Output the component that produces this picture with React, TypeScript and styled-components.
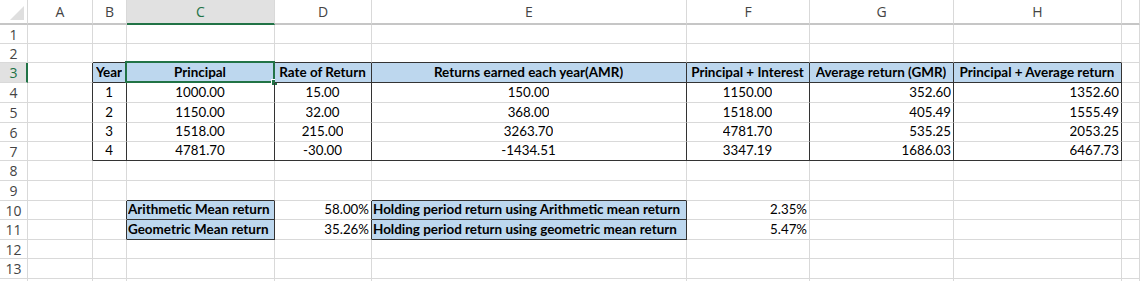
import React from "react";
import styled, { createGlobalStyle, css } from "styled-components";

const GlobalStyle = createGlobalStyle`
  body {
    margin: 0;
    background: #ffffff;
  }
`;

const GRID = "#d9d9d9";
const DARK = "#333333";
const GREEN = "#217346";
const BLUE = "#bdd7ee";

const COLS = ["A", "B", "C", "D", "E", "F", "G", "H", ""];
// last row is only partly visible at the bottom edge
const ROW_HEIGHTS = [19, 19, 20, 20, 20, 19, 19, 20, 20, 19, 20, 19, 20, 20];
const VISIBLE_ROWS = 13;

type Align = "left" | "center" | "right";

interface CellSpec {
  text?: string;
  bold?: boolean;
  align?: Align;
  fill?: boolean;
  top?: boolean;
  left?: boolean;
  right?: boolean;
  bottom?: boolean;
}

const cells: Record<string, CellSpec> = {};

const headers = [
  "Year",
  "Principal",
  "Rate of Return",
  "Returns earned each year(AMR)",
  "Principal + Interest",
  "Average return (GMR)",
  "Principal + Average return",
];
headers.forEach((text, i) => {
  cells[COLS[i + 1] + "3"] = {
    text,
    bold: true,
    align: "center",
    fill: true,
    top: true,
    left: true,
    right: true,
    bottom: true,
  };
});

const data = [
  ["1", "1000.00", "15.00", "150.00", "1150.00", "352.60", "1352.60"],
  ["2", "1150.00", "32.00", "368.00", "1518.00", "405.49", "1555.49"],
  ["3", "1518.00", "215.00", "3263.70", "4781.70", "535.25", "2053.25"],
  ["4", "4781.70", "-30.00", "-1434.51", "3347.19", "1686.03", "6467.73"],
];
data.forEach((row, r) => {
  row.forEach((text, i) => {
    cells[COLS[i + 1] + (r + 4)] = {
      text,
      align: i >= 5 ? "right" : "center",
      left: true,
      right: true,
      bottom: r === 3,
    };
  });
});

const boxed = { bold: true, fill: true, top: true, left: true, right: true, bottom: true, align: "left" as Align };
cells.C10 = { ...boxed, text: "Arithmetic Mean return" };
cells.C11 = { ...boxed, text: "Geometric Mean return" };
cells.E10 = { ...boxed, text: "Holding period return using Arithmetic mean return" };
cells.E11 = { ...boxed, text: "Holding period return using geometric mean return" };
cells.D10 = { text: "58.00%", align: "right" };
cells.D11 = { text: "35.26%", align: "right" };
cells.F10 = { text: "2.35%", align: "right" };
cells.F11 = { text: "5.47%", align: "right" };

const spec = (col: number, row: number): CellSpec => cells[(COLS[col] || "?") + row] || {};

const SELECTED_COL = "C";
const SELECTED_ROW = 3;

const Sheet = styled.div`
  display: grid;
  grid-template-columns: 28px 65px 34px 148px 97px 315px 123px 144px 168px 1fr;
  grid-template-rows: 25px ${ROW_HEIGHTS.map((h) => h + "px").join(" ")};
  width: 1140px;
  height: 281px;
  overflow: hidden;
  font-family: Lato, "Liberation Sans", sans-serif;
  color: #000000;
`;

const Corner = styled.div`
  position: relative;
  box-sizing: border-box;
  border-right: 1px solid ${GRID};
  border-bottom: 2px solid #c6c6c6;

  &::after {
    content: "";
    position: absolute;
    right: 3px;
    bottom: 3px;
    border-style: solid;
    border-width: 0 0 14px 14px;
    border-color: transparent transparent #dfdfdf transparent;
  }
`;

const ColHeader = styled.div<{ $selected: boolean }>`
  box-sizing: border-box;
  display: flex;
  align-items: center;
  justify-content: center;
  font-family: "Open Sans", "Noto Sans", sans-serif;
  font-size: 14px;
  color: #444444;
  border-right: 1px solid ${GRID};
  border-bottom: 2px solid #c6c6c6;

  ${({ $selected }) =>
    $selected &&
    css`
      background: #e1e1e1;
      color: ${GREEN};
      border-bottom: 2px solid ${GREEN};
    `}
`;

const RowHeader = styled.div<{ $selected: boolean }>`
  box-sizing: border-box;
  display: flex;
  align-items: center;
  justify-content: center;
  font-family: "Open Sans", "Noto Sans", sans-serif;
  font-size: 14px;
  color: #444444;
  border-right: 1px solid ${GRID};
  border-bottom: 1px solid ${GRID};

  ${({ $selected }) =>
    $selected &&
    css`
      background: #e1e1e1;
      color: ${GREEN};
      border-right: 2px solid ${GREEN};
      padding-left: 1px;
    `}
`;

const Cell = styled.div<{
  $align: Align;
  $bold: boolean;
  $fill: boolean;
  $right: string;
  $bottom: string;
  $selected: boolean;
}>`
  position: relative;
  box-sizing: border-box;
  display: flex;
  align-items: flex-end;
  justify-content: ${({ $align }) =>
    $align === "center" ? "center" : $align === "right" ? "flex-end" : "flex-start"};
  padding: 0 2px 1px 1px;
  font-size: ${({ $bold }) => ($bold ? "13.45px" : "13.3px")};
  line-height: 17px;
  font-weight: ${({ $bold }) => ($bold ? 700 : 400)};
  white-space: nowrap;
  background: ${({ $fill }) => ($fill ? BLUE : "transparent")};
  border-right: 1px solid ${({ $right }) => $right};
  border-bottom: 1px solid ${({ $bottom }) => $bottom};

  ${({ $selected }) =>
    $selected &&
    css`
      &::before {
        content: "";
        position: absolute;
        top: -2px;
        left: -2px;
        right: -1px;
        bottom: -1px;
        border: 2px solid ${GREEN};
        pointer-events: none;
      }
      &::after {
        content: "";
        position: absolute;
        right: -4px;
        bottom: -4px;
        width: 5px;
        height: 5px;
        background: ${GREEN};
        border: 1px solid #ffffff;
      }
    `}
`;

const CellText = styled.span`
  overflow: hidden;
`;

export default function App() {
  return (
    <>
      <GlobalStyle />
      <Sheet>
        <Corner />
        {COLS.map((c, i) => (
          <ColHeader key={"h" + i} $selected={c === SELECTED_COL}>
            {c}
          </ColHeader>
        ))}
        {ROW_HEIGHTS.map((_, ri) => {
          const row = ri + 1;
          return (
            <React.Fragment key={row}>
              <RowHeader $selected={row === SELECTED_ROW}>{row <= VISIBLE_ROWS ? row : ""}</RowHeader>
              {COLS.map((c, ci) => {
                const s = spec(ci, row);
                const darkRight = s.right || spec(ci + 1, row).left;
                const darkBottom = s.bottom || spec(ci, row + 1).top;
                return (
                  <Cell
                    key={c + row + ci}
                    $align={s.align || "left"}
                    $bold={!!s.bold}
                    $fill={!!s.fill}
                    $right={darkRight ? DARK : GRID}
                    $bottom={darkBottom ? DARK : GRID}
                    $selected={c === SELECTED_COL && row === SELECTED_ROW}
                  >
                    {s.text && <CellText>{s.text}</CellText>}
                  </Cell>
                );
              })}
            </React.Fragment>
          );
        })}
      </Sheet>
    </>
  );
}
